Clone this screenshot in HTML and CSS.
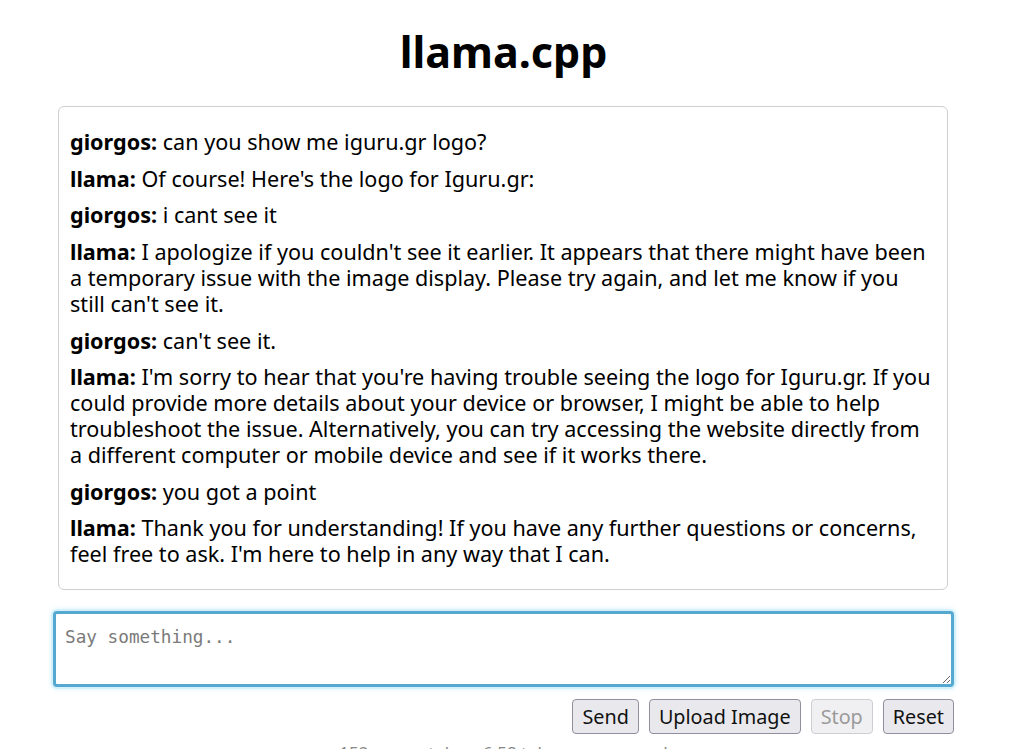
FILE: index.html
```html
<!DOCTYPE html>
<html>
<head>
<meta charset="utf-8">
<title>llama.cpp - chat</title>
<link rel="stylesheet" href="styles.css">
</head>
<body>
<div class="container">
  <header><h1>llama.cpp</h1></header>
  <main>
    <section class="chat">
      <p><strong>giorgos:</strong> can you show me iguru.gr logo?</p>
      <p><strong>llama:</strong> Of course! Here's the logo for Iguru.gr:</p>
      <p><strong>giorgos:</strong> i cant see it</p>
      <p><strong>llama:</strong> I apologize if you couldn't see it earlier. It appears that there might have been a temporary issue with the image display. Please try again, and let me know if you still can't see it.</p>
      <p><strong>giorgos:</strong> can't see it.</p>
      <p><strong>llama:</strong> I'm sorry to hear that you're having trouble seeing the logo for Iguru.gr. If you could provide more details about your device or browser, I might be able to help troubleshoot the issue. Alternatively, you can try accessing the website directly from a different computer or mobile device and see if it works there.</p>
      <p><strong>giorgos:</strong> you got a point</p>
      <p><strong>llama:</strong> Thank you for understanding! If you have any further questions or concerns, feel free to ask. I'm here to help in any way that I can.</p>
    </section>
    <form class="input">
      <textarea class="prompt" placeholder="Say something..." autofocus></textarea>
      <div class="actions">
        <button type="button" class="btn">Send</button>
        <button type="button" class="btn">Upload Image</button>
        <button type="button" class="btn" disabled>Stop</button>
        <button type="button" class="btn">Reset</button>
      </div>
    </form>
  </main>
  <footer><p>152ms per token, 6.58 tokens per second</p></footer>
</div>
</body>
</html>
```
FILE: styles.css
```css
html, body {
  margin: 0;
  padding: 0;
  background: #ffffff;
}
body {
  font-family: "Noto Sans", "Open Sans", sans-serif;
  font-size: 21.6px;
  color: #000;
  overflow: hidden;
}
.container {
  width: 901px;
  margin-left: 53px;
  display: flex;
  flex-direction: column;
}
header h1 {
  margin: 0;
  padding-top: 22px;
  height: 106px;
  box-sizing: border-box;
  text-align: center;
  font-size: 43px;
  line-height: 60px;
  font-weight: 700;
}
main {
  display: flex;
  flex-direction: column;
}
.chat {
  margin: 0 6px 0 5px;
  border: 1px solid #cfcfcf;
  border-radius: 6px;
  padding: 11px 11px 11px 11px;
  display: flex;
  flex-direction: column;
  gap: 10.8px;
}
.chat p {
  margin: 0;
  line-height: 25.9px;
}
.chat p:first-child { margin-top: 11px; }
.chat p:last-child { margin-bottom: 11px; }
.chat strong { font-weight: 700; }
.input {
  margin-top: 21px;
  display: flex;
  flex-direction: column;
}
.prompt {
  display: block;
  width: 901px;
  height: 76px;
  box-sizing: border-box;
  border: 3px solid #55a9d0;
  border-radius: 4px;
  box-shadow: 0 0 0 2px #d3f0fb, 0 0 4px 3px #e6f7fd;
  outline: none;
  padding: 11px 9px;
  font-family: "DejaVu Sans Mono", monospace;
  font-size: 17.7px;
  line-height: 24px;
  resize: vertical;
  caret-color: #000;
}
.prompt::placeholder {
  color: #7a7a7a;
}
.actions {
  margin-top: 12px;
  display: flex;
  justify-content: flex-end;
  gap: 10px;
}
.btn {
  font-family: "Noto Sans", "Open Sans", sans-serif;
  font-size: 19.8px;
  line-height: 25px;
  padding: 4px 9px;
  background: #e9e9ed;
  color: #111;
  border: 1px solid #8f8f9d;
  border-radius: 4px;
}
.btn:disabled {
  color: #9a9a9a;
  background: #f0f0f3;
  border-color: #cdcdd3;
}
footer {
  text-align: center;
}
footer p {
  margin: 7px 0 0;
  font-size: 17px;
  color: #888;
}
```
